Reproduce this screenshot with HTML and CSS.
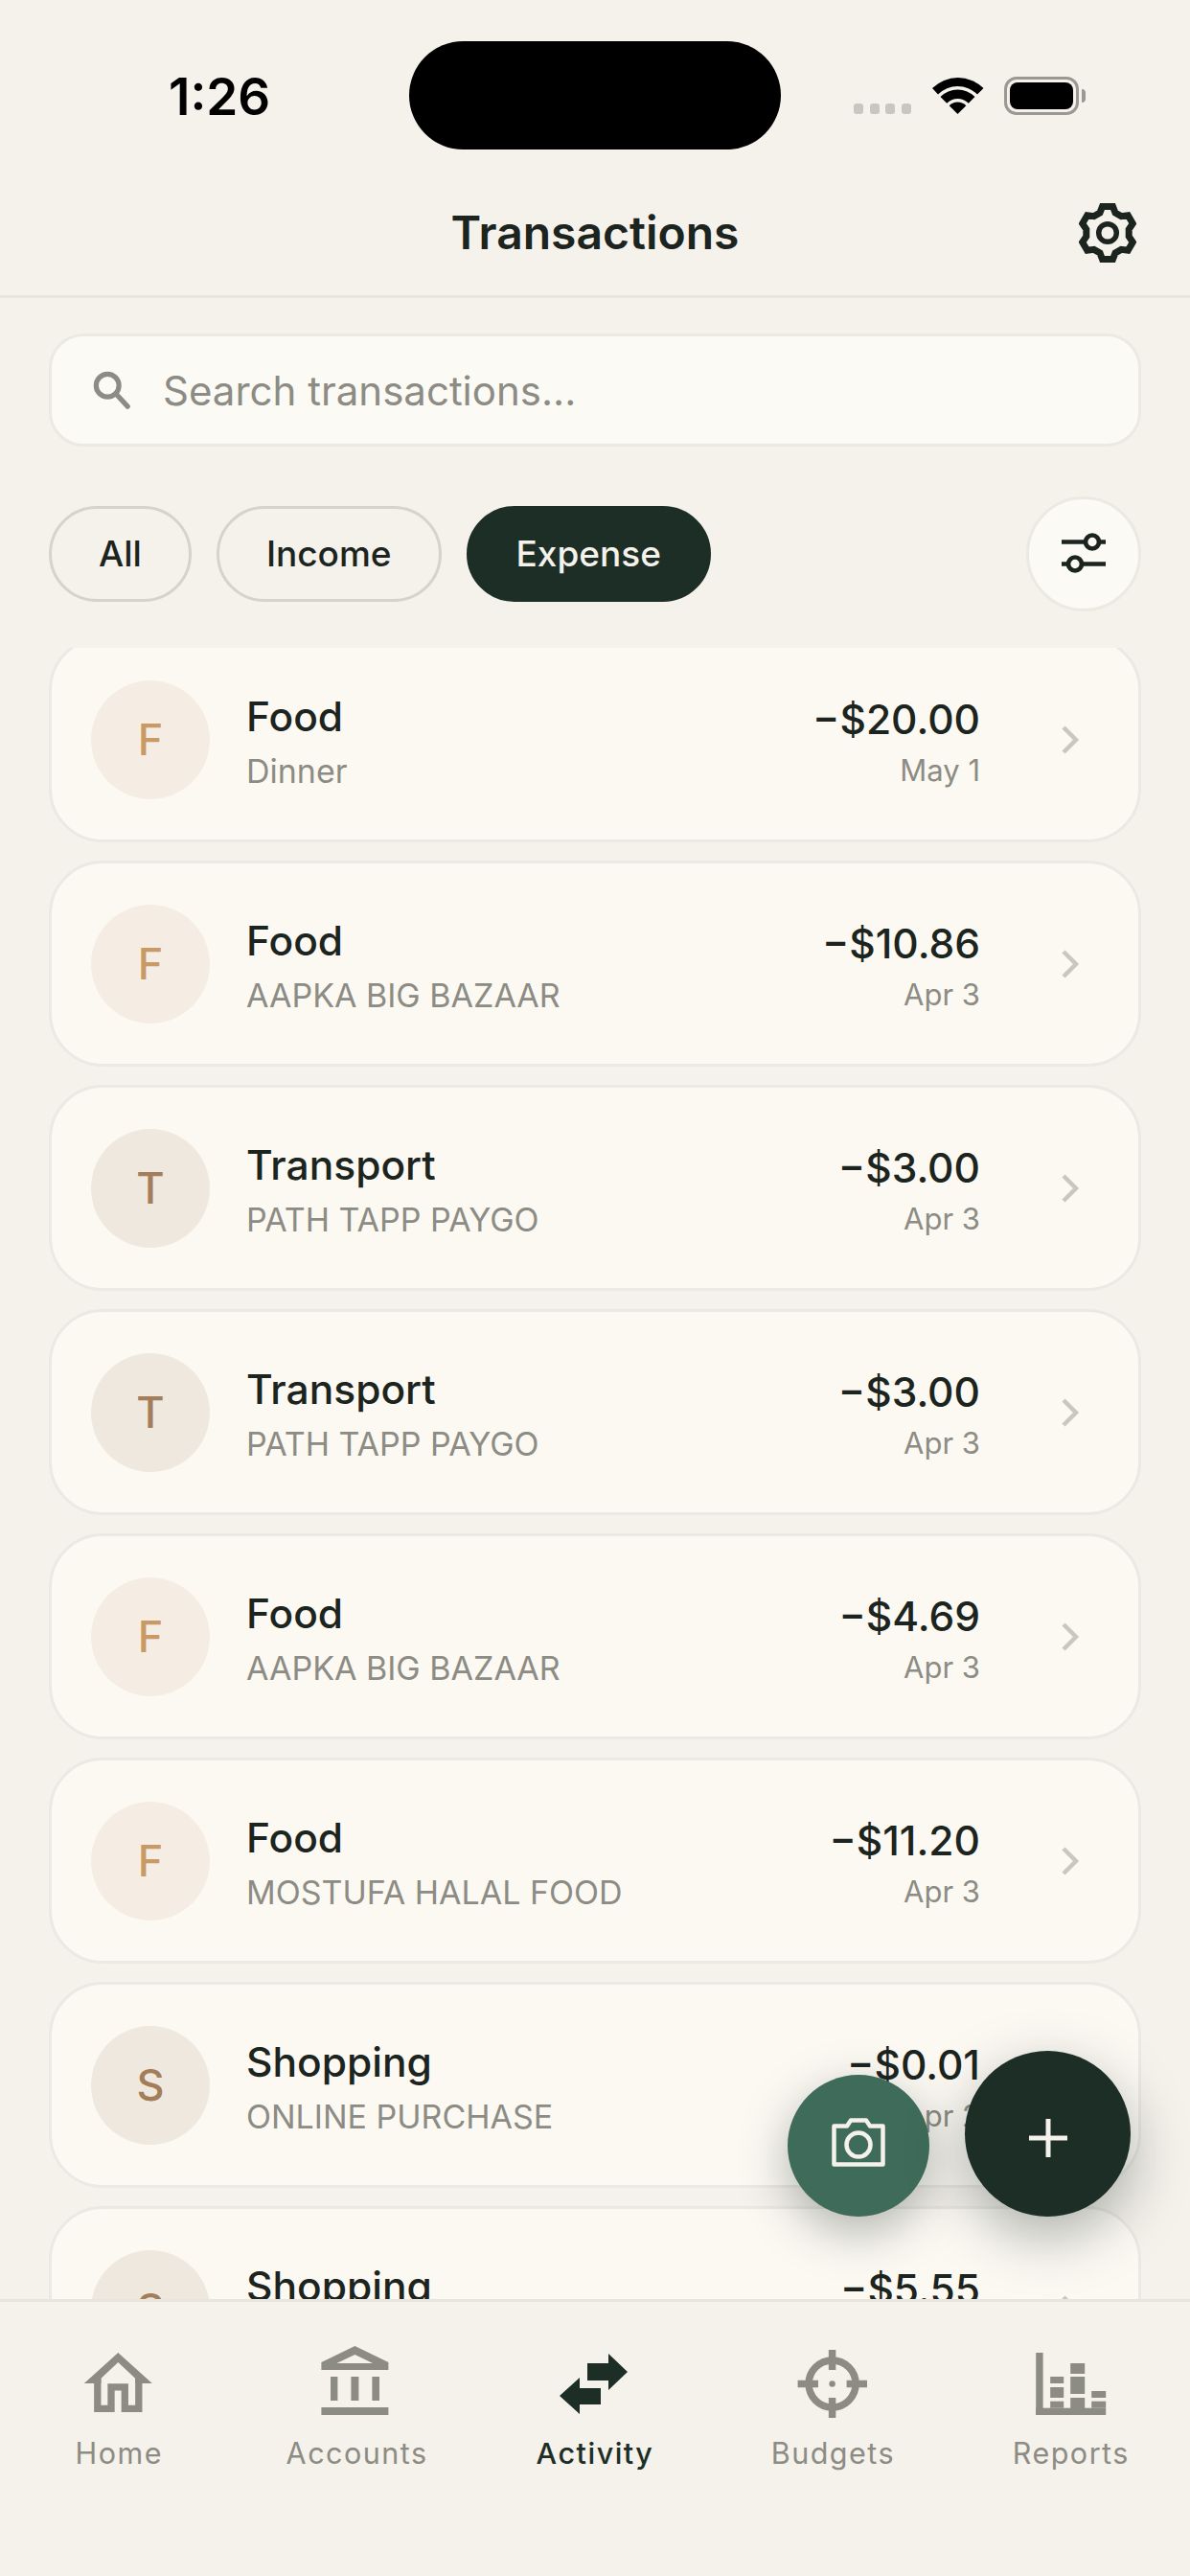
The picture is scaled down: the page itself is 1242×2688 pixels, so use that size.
FILE: index.html
```html
<!DOCTYPE html>
<html lang="en">
<head>
    <meta charset="UTF-8">
    <meta name="viewport" content="width=device-width, initial-scale=1.0">
    <title>Transactions</title>
    <link rel="stylesheet" href="styles.css">
</head>
<body>
    <div class="screen">
        <div class="status-bar">
            <span class="clock">1:26</span>
            <div class="island"></div>
            <div class="signal">
                <span></span><span></span><span></span><span></span>
            </div>
            <svg class="wifi" width="54" height="38" viewBox="0 0 54 38">
                <path d="M0 11.1A38 38 0 0 1 53.5 11.1L47 17.5A29 29 0 0 0 6 17.5Z"/>
                <path d="M8.5 20A25.5 25.5 0 0 1 44.5 20L37.8 26.7A16 16 0 0 0 15.2 26.7Z"/>
                <path d="M17.7 29.2A12.5 12.5 0 0 1 35.3 29.2L26.5 38Z"/>
            </svg>
            <div class="battery"><div class="battery-level"></div></div>
            <div class="battery-tip"></div>
        </div>

        <header class="top-bar">
            <h1>Transactions</h1>
            <svg class="gear" width="60" height="62" viewBox="0 0 60 62" fill="none" stroke="#1c2420" stroke-width="7" stroke-linejoin="miter">
                <path d="M22 10L24.5 3.5H35.5L38 10L44.2 13.6L51.3 12.7L56.3 21.3L52.2 27.4V34.6L56.3 40.7L51.3 49.3L44.2 48.4L38 52L35.5 58.5H24.5L22 52L15.8 48.4L8.7 49.3L3.7 40.7L7.8 34.6V27.4L3.7 21.3L8.7 12.7L15.8 13.6Z"/>
                <circle cx="30" cy="31" r="9.3" stroke-width="5.5"/>
            </svg>
        </header>

        <div class="search">
            <svg width="40" height="40" viewBox="0 0 42 42" fill="none" stroke="#8c8c84" stroke-width="5.5" stroke-linecap="round">
                <circle cx="16" cy="16" r="12.5"/>
                <path d="M25.5 25.5L38 39"/>
            </svg>
            <span>Search transactions...</span>
        </div>

        <div class="filters">
            <button class="chip">All</button>
            <button class="chip">Income</button>
            <button class="chip chip-active">Expense</button>
            <button class="filter-btn">
                <svg width="48" height="44" viewBox="0 0 48 44" fill="none" stroke="#1c2420" stroke-width="4.7">
                    <path d="M1 9.5H47M1 32.5H47"/>
                    <circle cx="33" cy="9.5" r="7" fill="#fcfaf4"/>
                    <circle cx="15" cy="32.5" r="7" fill="#fcfaf4"/>
                </svg>
            </button>
        </div>

        <div class="list">
            <div class="card">
                <div class="avatar avatar-food">F</div>
                <div class="info"><div class="name">Food</div><div class="note">Dinner</div></div>
                <div class="money"><div class="amount">−$20.00</div><div class="date">May 1</div></div>
                <svg class="chevron" width="20" height="30" viewBox="0 0 20 30"><path d="M3 2L16 15L3 28"/></svg>
            </div>
            <div class="card">
                <div class="avatar avatar-food">F</div>
                <div class="info"><div class="name">Food</div><div class="note">AAPKA BIG BAZAAR</div></div>
                <div class="money"><div class="amount">−$10.86</div><div class="date">Apr 3</div></div>
                <svg class="chevron" width="20" height="30" viewBox="0 0 20 30"><path d="M3 2L16 15L3 28"/></svg>
            </div>
            <div class="card">
                <div class="avatar avatar-other">T</div>
                <div class="info"><div class="name">Transport</div><div class="note">PATH TAPP PAYGO</div></div>
                <div class="money"><div class="amount">−$3.00</div><div class="date">Apr 3</div></div>
                <svg class="chevron" width="20" height="30" viewBox="0 0 20 30"><path d="M3 2L16 15L3 28"/></svg>
            </div>
            <div class="card">
                <div class="avatar avatar-other">T</div>
                <div class="info"><div class="name">Transport</div><div class="note">PATH TAPP PAYGO</div></div>
                <div class="money"><div class="amount">−$3.00</div><div class="date">Apr 3</div></div>
                <svg class="chevron" width="20" height="30" viewBox="0 0 20 30"><path d="M3 2L16 15L3 28"/></svg>
            </div>
            <div class="card">
                <div class="avatar avatar-food">F</div>
                <div class="info"><div class="name">Food</div><div class="note">AAPKA BIG BAZAAR</div></div>
                <div class="money"><div class="amount">−$4.69</div><div class="date">Apr 3</div></div>
                <svg class="chevron" width="20" height="30" viewBox="0 0 20 30"><path d="M3 2L16 15L3 28"/></svg>
            </div>
            <div class="card">
                <div class="avatar avatar-food">F</div>
                <div class="info"><div class="name">Food</div><div class="note">MOSTUFA HALAL FOOD</div></div>
                <div class="money"><div class="amount">−$11.20</div><div class="date">Apr 3</div></div>
                <svg class="chevron" width="20" height="30" viewBox="0 0 20 30"><path d="M3 2L16 15L3 28"/></svg>
            </div>
            <div class="card">
                <div class="avatar avatar-other">S</div>
                <div class="info"><div class="name">Shopping</div><div class="note">ONLINE PURCHASE</div></div>
                <div class="money"><div class="amount">−$0.01</div><div class="date">Apr 2</div></div>
                <svg class="chevron" width="20" height="30" viewBox="0 0 20 30"><path d="M3 2L16 15L3 28"/></svg>
            </div>
            <div class="card">
                <div class="avatar avatar-other">S</div>
                <div class="info"><div class="name">Shopping</div><div class="note">ONLINE PURCHASE</div></div>
                <div class="money"><div class="amount">−$5.55</div><div class="date">Apr 2</div></div>
                <svg class="chevron" width="20" height="30" viewBox="0 0 20 30"><path d="M3 2L16 15L3 28"/></svg>
            </div>
        </div>

        <nav class="tab-bar">
            <div class="tab">
                <svg width="76" height="76" viewBox="0 0 76 76" fill="#8c8c84">
                    <g transform="translate(1.8 7)">
                        <path d="M35.5 0L71 32H53.3V26.7L35.5 10L17.7 26.7V32H0Z"/>
                        <path d="M14 26V58.3H28.2V35.8H42.5V58.3H57V26" fill="none" stroke="#8c8c84" stroke-width="7.3"/>
                    </g>
                </svg>
                <span>Home</span>
            </div>
            <div class="tab">
                <svg width="76" height="76" viewBox="0 0 76 76" fill="#8c8c84">
                    <path fill-rule="evenodd" d="M35.4 0L70.4 17V25H.4V17ZM35.4 9L16.4 18H54Z"/>
                    <rect x="10" y="32" width="7.4" height="25"/>
                    <rect x="31.4" y="32" width="8" height="25"/>
                    <rect x="53.4" y="32" width="7.6" height="25"/>
                    <rect x=".4" y="64" width="70" height="8"/>
                </svg>
                <span>Accounts</span>
            </div>
            <div class="tab tab-active">
                <svg width="76" height="76" viewBox="0 0 76 76" fill="#1c2e26">
                    <path d="M1 52L22 33V44H44V61H22V71Z"/>
                    <path d="M72 27L52 8V18H30V36H52V46Z"/>
                </svg>
                <span>Activity</span>
            </div>
            <div class="tab">
                <svg width="76" height="76" viewBox="0 0 76 76" fill="none" stroke="#8c8c84" stroke-width="7.5">
                    <circle cx="37.6" cy="39.5" r="24.5"/>
                    <path d="M37.6 4V25M37.6 54V75M1.6 39.5H23M52.6 39.5H74"/>
                    <circle cx="37.6" cy="39.5" r="3.2" fill="#8c8c84" stroke="none"/>
                </svg>
                <span>Budgets</span>
            </div>
            <div class="tab">
                <svg width="76" height="76" viewBox="0 0 76 76" fill="#8c8c84">
                    <rect x="1.2" y="7" width="7.4" height="65"/>
                    <rect x="1.2" y="64.7" width="73" height="7.3"/>
                    <rect x="16.2" y="32" width="14" height="7"/>
                    <rect x="16.2" y="43" width="14" height="11"/>
                    <rect x="16.2" y="57.7" width="14" height="7"/>
                    <rect x="37.2" y="18" width="15" height="11"/>
                    <rect x="37.2" y="32" width="15" height="18"/>
                    <rect x="37.2" y="54" width="15" height="11"/>
                    <rect x="59.2" y="47" width="15" height="7"/>
                    <rect x="59.2" y="57.7" width="15" height="7"/>
                </svg>
                <span>Reports</span>
            </div>
        </nav>

        <!-- floating actions sit over the list -->
        <button class="fab fab-camera">
            <svg width="56" height="51" viewBox="0 0 56 51" fill="none" stroke="#f5f1eb" stroke-width="4.5" stroke-linejoin="round">
                <path d="M2.5 8.5H16L20 2.5H36L40 8.5H53.5V48.5H2.5Z"/>
                <circle cx="28" cy="28" r="12.5"/>
            </svg>
        </button>
        <button class="fab fab-add">
            <svg width="40" height="40" viewBox="0 0 40 40" fill="none" stroke="#f5f1eb" stroke-width="5">
                <path d="M20 0V40M0 20H40"/>
            </svg>
        </button>
    </div>
</body>
</html>
```

FILE: styles.css
```css
* {
    box-sizing: border-box;
}
body {
    margin: 0;
    background-color: #f5f1eb;
    font-family: Inter, "Noto Sans", sans-serif;
    color: #1c2420;
}
.screen {
    position: relative;
    width: 1242px;
    height: 2688px;
    overflow: hidden;
    display: flex;
    flex-direction: column;
}

/* status bar */
.status-bar {
    height: 180px;
    flex-shrink: 0;
    display: flex;
    align-items: flex-start;
}
.clock {
    margin: 66px 0 0 176px;
    width: 715px;
    font-size: 53px;
    line-height: 70px;
    font-weight: 600;
    color: #000;
}
.island {
    position: absolute;
    left: 427px;
    top: 43px;
    width: 388px;
    height: 113px;
    border-radius: 57px;
    background-color: #000;
}
.signal {
    margin-top: 108px;
    width: 82px;
    display: flex;
    gap: 6.5px;
}
.signal span {
    width: 10px;
    height: 11px;
    border-radius: 3px;
    background-color: #c8c6c0;
}
.wifi {
    margin-top: 81px;
    fill: #000;
}
.battery {
    margin: 80px 0 0 21px;
    width: 78px;
    height: 40px;
    padding: 3px;
    border: 3px solid #9a9892;
    border-radius: 13px;
}
.battery-level {
    width: 100%;
    height: 100%;
    background-color: #000;
    border-radius: 8px;
}
.battery-tip {
    margin: 93px 0 0 3px;
    width: 4px;
    height: 14px;
    border-radius: 0 4px 4px 0;
    background-color: #9a9892;
}

/* title row */
.top-bar {
    position: relative;
    height: 131px;
    flex-shrink: 0;
    display: flex;
    align-items: center;
    justify-content: center;
    padding-bottom: 3px;
    border-bottom: 3px solid #e8e5de;
}
.top-bar h1 {
    margin: 0;
    font-size: 48px;
    font-weight: 600;
}
.gear {
    position: absolute;
    left: 1126px;
    top: 32px;
}

.search {
    margin: 37px 51px 0;
    height: 118px;
    flex-shrink: 0;
    display: flex;
    align-items: center;
    gap: 33px;
    padding-left: 43px;
    background-color: #fcfaf4;
    border: 3px solid #ece9e2;
    border-radius: 36px;
    font-size: 42px;
    color: #8c8c84;
}

.filters {
    margin: 51px 51px 0;
    height: 121px;
    flex-shrink: 0;
    display: flex;
    align-items: center;
    gap: 26px;
}
.chip {
    height: 100px;
    padding: 0 49px;
    border: 3px solid #d4d4cc;
    border-radius: 50px;
    background: none;
    font-family: inherit;
    font-size: 37px;
    font-weight: 500;
    color: #1c2420;
}
.chip-active {
    background-color: #1c2e26;
    border-color: #1c2e26;
    color: #f5f1eb;
}
.filter-btn {
    margin-left: auto;
    width: 120px;
    height: 120px;
    padding: 0;
    display: flex;
    align-items: center;
    justify-content: center;
    background-color: #fcfaf4;
    border: 3px solid #ece9e2;
    border-radius: 50%;
}

/* transaction rows */
.list {
    margin-top: 38px;
    flex: 1;
    min-height: 0;
    overflow: hidden;
    display: flex;
    flex-direction: column;
    gap: 19px;
    padding: 0 51px;
}
.card {
    height: 215px;
    flex-shrink: 0;
    display: flex;
    align-items: center;
    padding: 0 61px 0 41px;
    background-color: #fcf9f3;
    border: 3px solid #ebe9e3;
    border-radius: 56px;
}
.card:first-child {
    margin-top: -12px;
}
.avatar {
    width: 124px;
    height: 124px;
    flex-shrink: 0;
    border-radius: 50%;
    display: flex;
    align-items: center;
    justify-content: center;
    font-size: 45px;
    font-weight: 500;
}
.avatar-food {
    background-color: #f5ede3;
    color: #c99a66;
}
.avatar-other {
    background-color: #efe8df;
    color: #a47e5a;
}
.info {
    margin-left: 38px;
    flex: 1;
    padding-top: 3px;
}
.name {
    font-size: 42.5px;
    font-weight: 500;
    line-height: 56px;
}
.note {
    margin-top: 7px;
    font-size: 34px;
    line-height: 44px;
    color: #8c8c84;
}
.money {
    text-align: right;
    padding-top: 6px;
}
.amount {
    font-size: 42.5px;
    font-weight: 500;
    line-height: 56px;
}
.date {
    margin-top: 3px;
    font-size: 31px;
    line-height: 44px;
    color: #8c8c84;
}
.chevron {
    margin-left: 84px;
    fill: none;
    stroke: #c8c7c0;
    stroke-width: 4.5;
}

/* bottom navigation */
.tab-bar {
    height: 289px;
    flex-shrink: 0;
    display: flex;
    padding-top: 46px;
    background-color: #f5f1eb;
    border-top: 3px solid #e8e5de;
}
.tab {
    flex: 1;
    display: flex;
    flex-direction: column;
    align-items: center;
    font-size: 30.5px;
    letter-spacing: 1.5px;
    color: #8c8c84;
}
.tab span {
    margin-top: 14px;
    line-height: 44px;
}
.tab-active {
    color: #1c2e26;
    font-weight: 500;
}

.fab {
    position: absolute;
    padding: 0;
    border: none;
    border-radius: 50%;
    display: flex;
    align-items: center;
    justify-content: center;
}
.fab-camera {
    left: 822px;
    top: 2165px;
    width: 148px;
    height: 148px;
    padding-bottom: 7px;
    background-color: #3f6b5a;
    box-shadow: 0 16px 50px rgba(28, 46, 38, 0.34);
}
.fab-add {
    left: 1007px;
    top: 2140px;
    width: 173px;
    height: 173px;
    padding-top: 9px;
    background-color: #1c2e26;
    box-shadow: 0 20px 60px rgba(28, 46, 38, 0.36);
}
```
